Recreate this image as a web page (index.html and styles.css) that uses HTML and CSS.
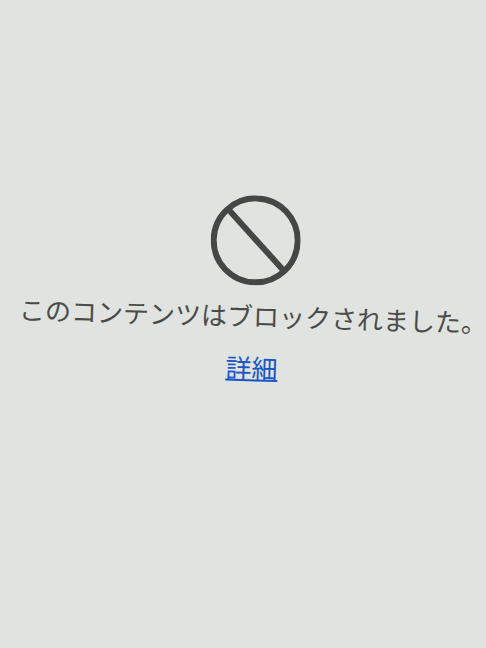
FILE: index.html
```html
<!DOCTYPE html>
<html lang="ja">
<head>
  <meta charset="UTF-8" />
  <meta name="viewport" content="width=device-width, initial-scale=1.0"/>
  <title>ブロックされたコンテンツ</title>
  <link rel="stylesheet" href="styles.css">
</head>
<body>
  <main class="blocked">
    <svg class="blocked-icon" viewBox="0 0 90 90" aria-hidden="true">
      <circle cx="45" cy="45" r="42" />
      <path d="M17 15 L73.5 74" />
    </svg>
    <p class="blocked-text">このコンテンツはブロックされました。</p>
    <a class="blocked-link" href="#">詳細</a>
  </main>
</body>
</html>
```

FILE: styles.css
```css
/* keep the tilted block from adding scrollbars */
html {
  overflow: hidden;
}

body {
  margin: 0;
  font-family: "Noto Sans CJK JP", sans-serif;
  background: #e0e3e0;
  color: #4a4c4a;
}

.blocked {
  display: flex;
  flex-direction: column;
  align-items: center;
  padding: 195px 0 0 27px;
  font-size: 26px;
  line-height: 36px;
  transform: rotate(1.6deg);
}

.blocked-icon {
  width: 90px;
  height: 90px;
  fill: none;
  stroke: #444746;
  stroke-width: 6;
}

.blocked-text {
  margin: 12px 0 16px;
  white-space: nowrap;
}

.blocked-link {
  color: #1a56c8;
  text-decoration: underline;
  text-decoration-thickness: 2px;
  text-decoration-skip-ink: none;
}
```
